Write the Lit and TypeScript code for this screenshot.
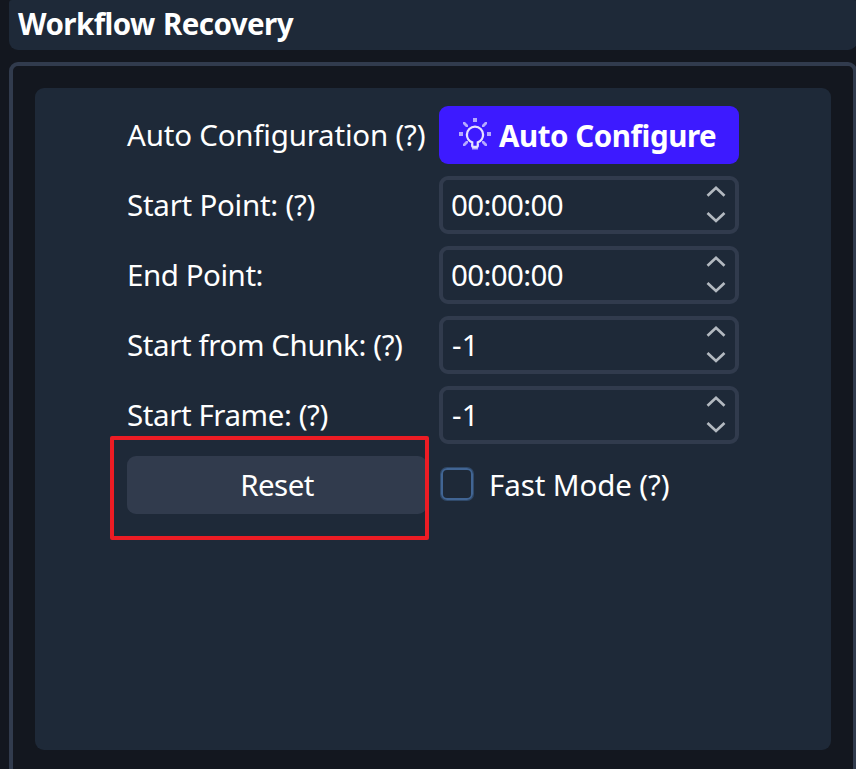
import { LitElement, html, css } from "lit";
import { customElement, property } from "lit/decorators.js";

@customElement("spin-field")
class SpinField extends LitElement {
  @property() value = "";
  @property() kind = "time";

  static styles = css`
    :host {
      display: flex;
      align-items: center;
      justify-content: space-between;
      box-sizing: border-box;
      width: 300px;
      height: 58px;
      padding: 0 9px 0 8px;
      border: 4px solid #313b4d;
      border-radius: 9px;
    }
    .value { letter-spacing: -0.65px; white-space: nowrap; }
    .value.number { padding-left: 1px; letter-spacing: 0.3px; }
    .steps { display: block; width: 20px; height: 38px; margin-top: -2px; fill: none; stroke: #b3b9c0; stroke-width: 2.7; }
  `;

  render() {
    return html`
      <span class="value ${this.kind}">${this.value}</span>
      <svg class="steps" viewBox="0 0 20 38">
        <path d="M1.5 10.8 L10 2.8 L18.5 10.8" />
        <path d="M1.5 28 L10 36 L18.5 28" />
      </svg>
    `;
  }
}

@customElement("app-root")
class AppRoot extends LitElement {
  static styles = css`
    :host {
      display: block;
      height: 769px;
      overflow: hidden;
      background: #13171f;
      color: #fff;
      font: 29.5px/40px "Noto Sans", "Open Sans", sans-serif;
    }
    .header {
      box-sizing: border-box;
      width: 848px;
      height: 50px;
      margin-left: 9px;
      padding: 4px 0 0 9px;
      border-radius: 3px 3px 9px 9px;
      background: #1e2938;
    }
    .title { display: block; font-weight: 700; letter-spacing: -0.55px; word-spacing: 1px; white-space: nowrap; }
    .frame {
      box-sizing: border-box;
      width: 848px;
      height: 720px;
      margin: 12px 0 0 9px;
      padding: 22px;
      border: 4px solid #313b4d;
      border-radius: 9px;
    }
    .panel {
      box-sizing: border-box;
      width: 796px;
      height: 662px;
      padding: 18px 0 0 92px;
      border-radius: 9px;
      background: #1e2938;
    }
    .form {
      display: grid;
      grid-template-columns: 300px 300px;
      grid-auto-rows: 58px;
      gap: 12px;
      align-items: center;
    }
    .label { white-space: nowrap; }
    .l0 { letter-spacing: -0.2px; }
    .l1 { letter-spacing: -0.25px; }
    .l2 { letter-spacing: -0.45px; }
    .l3 { letter-spacing: -0.4px; }
    .l4 { letter-spacing: -0.42px; }
    .auto, .reset {
      display: flex;
      align-items: center;
      box-sizing: border-box;
      height: 58px;
      width: 300px;
      border: 0;
      border-radius: 9px;
      color: #fff;
      font: inherit;
      white-space: nowrap;
    }
    .auto { gap: 7px; padding: 0 0 0 19px; background: #3d1aff; font-weight: 700; letter-spacing: -0.43px; }
    .auto-text { padding-top: 1px; }
    .bulb { display: block; flex: none; width: 34px; height: 34px; margin-top: -2px; fill: none; }
    .glass { stroke: #e6e1ff; stroke-width: 2.3; }
    .rays { fill: #b5a8ff; }
    .reset { position: relative; justify-content: center; padding: 0; background: #313b4d; letter-spacing: -0.55px; }
    .mark {
      position: absolute;
      inset: -20px -2px -26px -17px;
      border: 4px solid #ed1c24;
      border-radius: 2px;
    }
    .check { display: flex; align-items: center; gap: 16px; white-space: nowrap; letter-spacing: -0.1px; }
    .box {
      box-sizing: border-box;
      width: 32px;
      height: 32px;
      margin: -3px 0 0 2px;
      border: 2px solid #416594;
      border-radius: 6px;
      box-shadow: 0 0 0 1px #304969;
    }
  `;

  fields = [
    ["Start Point: (?)", "00:00:00", "time"],
    ["End Point:", "00:00:00", "time"],
    ["Start from Chunk: (?)", "-1", "number"],
    ["Start Frame: (?)", "-1", "number"],
  ];

  render() {
    return html`
      <header class="header"><span class="title">Workflow Recovery</span></header>
      <section class="frame">
        <div class="panel">
          <div class="form">
            <span class="label l0">Auto Configuration (?)</span>
            <button class="auto">
              <svg class="bulb" viewBox="0 0 34 34">
                <path class="rays" d="M15 1h4v4h-4z M1 15h4v4H1z M29 15h4v4h-4z M5 5h2l3 3v2h-2l-3-3z M29 5h-2l-3 3v2h2l3-3z M5 29h2l3-3v-2h-2l-3 3z M29 29h-2l-3-3v-2h2l3 3z M14 31h6v1.5h-6z" />
                <path class="glass" d="M14.2 25.4 C11 24.2 8.9 20.8 8.9 17.7 A8.1 8.1 0 0 1 25.1 17.7 C25.1 20.8 23 24.2 19.8 25.4 V28.4 Q19.8 30 18.3 30 H15.7 Q14.2 30 14.2 28.4 Z" />
              </svg>
              <span class="auto-text">Auto Configure</span>
            </button>
            ${this.fields.map(
              ([label, value, kind], i) => html`
                <span class="label l${i + 1}">${label}</span>
                <spin-field .value=${value} .kind=${kind}></spin-field>
              `,
            )}
            <button class="reset">Reset<span class="mark"></span></button>
            <div class="check"><span class="box"></span><span>Fast Mode (?)</span></div>
          </div>
        </div>
      </section>
    `;
  }
}
